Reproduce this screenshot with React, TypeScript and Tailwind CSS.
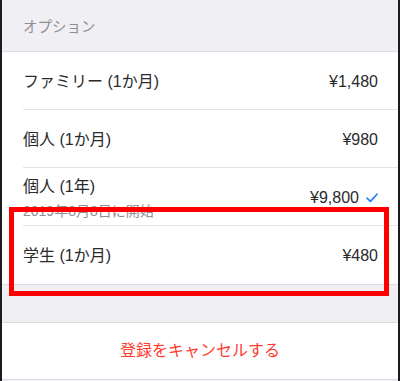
const FONT = "font-['Liberation_Sans','Noto_Sans_CJK_JP',sans-serif]";

type Plan = { name: string; price: string; note?: string; checked?: boolean };

const PLANS: Plan[] = [
  { name: "ファミリー (1か月)", price: "¥1,480" },
  { name: "個人 (1か月)", price: "¥980" },
  { name: "個人 (1年)", price: "¥9,800", note: "2019年8月8日に開始", checked: true },
  { name: "学生 (1か月)", price: "¥480" },
];

function Check() {
  return (
    <svg width="12" height="10" viewBox="0 0 12 10" className="ml-[7px]" aria-hidden>
      <path d="M1 5.2 L4.4 8.4 L11 1.2" fill="none" stroke="#1a7cf5" strokeWidth="1.6" strokeLinecap="round" strokeLinejoin="round" />
    </svg>
  );
}

export default function App() {
  return (
    <div className={`relative h-[381px] w-[400px] overflow-hidden border-x-2 border-[#1c1c1e] bg-[#efeff4] ${FONT}`}>
      <div className="flex h-[51px] items-end pb-[12px] pl-[21px] text-[14.5px] text-[#8e8e93]">オプション</div>
      <ul className="border-y border-[#dcdce0] bg-white">
        {PLANS.map((plan, i) => (
          <li key={plan.name} className="pl-[21px]">
            <div
              className={`flex h-[58px] items-center pr-[20px] pt-[2px] ${i < PLANS.length - 1 ? "border-b border-[#e3e3e6]" : ""}`}
            >
              <div className="flex flex-1 flex-col">
                <span className="text-[16px] leading-[20px] text-[#2a2a2c]">{plan.name}</span>
                {plan.note && <span className="mt-[6px] text-[14px] leading-[16px] text-[#8e8e93]">{plan.note}</span>}
              </div>
              <span className="flex items-center text-[16px] text-[#2a2a2c]">
                {plan.price}
                {plan.checked && <Check />}
              </span>
            </div>
          </li>
        ))}
      </ul>
      <div className="h-[37px]" />
      <div className="flex h-[58px] items-center justify-center border-y border-[#dcdce0] bg-white text-[16px] text-[#ff3b30]">
        登録をキャンセルする
      </div>
      <div className="pointer-events-none absolute left-[7px] top-[207px] h-[89px] w-[380px] border-[5px] border-[#ff0000]" />
    </div>
  );
}
